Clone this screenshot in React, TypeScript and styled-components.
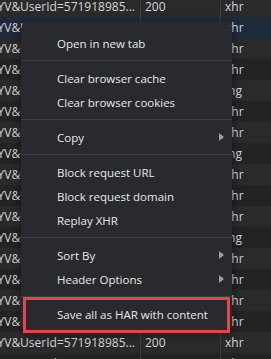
import React from "react";
import styled, { createGlobalStyle } from "styled-components";

const Global = createGlobalStyle`
  html, body {
    margin: 0;
    padding: 0;
    background: #242424;
    overflow: hidden;
  }
  body {
    font-family: "Open Sans", "Noto Sans", sans-serif;
    -webkit-font-smoothing: antialiased;
  }
`;

const Page = styled.div`
  position: relative;
  width: 271px;
  height: 359px;
  overflow: hidden;
`;

const Table = styled.div`
  display: flex;
  flex-direction: column;
  margin-top: -4px;
`;

const Row = styled.div<{ $bg: string }>`
  display: grid;
  grid-template-columns: 141px 80px 1fr;
  height: 21px;
  background: ${(p) => p.$bg};
  color: #d6d6d6;
  font-size: 12px;
  line-height: 22px;
`;

const NameCell = styled.div`
  display: flex;
  justify-content: flex-end;
  overflow: hidden;
  white-space: nowrap;
  padding-right: 5px;
  border-right: 1px solid #3e3e3e;
`;

const NameText = styled.span`
  flex-shrink: 0;
`;

const Cell = styled.div<{ $divider?: boolean }>`
  padding-left: 4px;
  white-space: nowrap;
  overflow: hidden;
  border-right: ${(p) => (p.$divider ? "1px solid #3e3e3e" : "none")};
`;

const Menu = styled.div`
  position: absolute;
  left: 21px;
  top: 22px;
  width: 211px;
  padding: 9px 0 6px;
  background: #292a2d;
  border-radius: 8px;
  box-shadow: 0 2px 10px rgba(0, 0, 0, 0.45);
  display: flex;
  flex-direction: column;
  font-size: 11.5px;
  color: #e8e8e8;
`;

const Item = styled.div`
  height: 24px;
  display: flex;
  align-items: center;
  justify-content: space-between;
  padding: 0 8px 0 36px;
  white-space: nowrap;
`;

const Arrow = styled.span`
  width: 0;
  height: 0;
  border-left: 5px solid #9c9c9c;
  border-top: 4px solid transparent;
  border-bottom: 4px solid transparent;
`;

const Separator = styled.div`
  height: 11px;
  display: flex;
  align-items: center;
  &::after {
    content: "";
    flex: 1;
    height: 1px;
    background: #3d3e42;
  }
`;

const Highlight = styled.div`
  position: absolute;
  left: 23px;
  top: 297px;
  width: 207px;
  height: 36px;
  box-sizing: border-box;
  border: 3px solid #e8434b;
  pointer-events: none;
`;

const types = [
  "xhr", "xhr", "xhr", "xhr", "ing", "xhr", "xhr", "ing", "xhr", "xhr",
  "xhr", "ing", "xhr", "xhr", "xhr", "xhr", "xhr", "xhr",
];

type Entry = { label: string; sub?: boolean } | "sep";

const menu: Entry[] = [
  { label: "Open in new tab" },
  "sep",
  { label: "Clear browser cache" },
  { label: "Clear browser cookies" },
  "sep",
  { label: "Copy", sub: true },
  "sep",
  { label: "Block request URL" },
  { label: "Block request domain" },
  { label: "Replay XHR" },
  "sep",
  { label: "Sort By", sub: true },
  { label: "Header Options", sub: true },
  "sep",
  { label: "Save all as HAR with content" },
];

export default function App() {
  return (
    <Page>
      <Global />
      <Table>
        {types.map((t, i) => (
          <Row
            key={i}
            $bg={i === 1 ? "#1d2a3b" : i % 2 === 0 ? "#2a2a2a" : "#232323"}
          >
            <NameCell>
              <NameText>YYYV&amp;UserId=571918985...</NameText>
            </NameCell>
            <Cell $divider>200</Cell>
            <Cell>{t}</Cell>
          </Row>
        ))}
      </Table>
      <Menu>
        {menu.map((m, i) =>
          m === "sep" ? (
            <Separator key={i} />
          ) : (
            <Item key={i}>
              <span>{m.label}</span>
              {m.sub && <Arrow />}
            </Item>
          )
        )}
      </Menu>
      <Highlight />
    </Page>
  );
}
